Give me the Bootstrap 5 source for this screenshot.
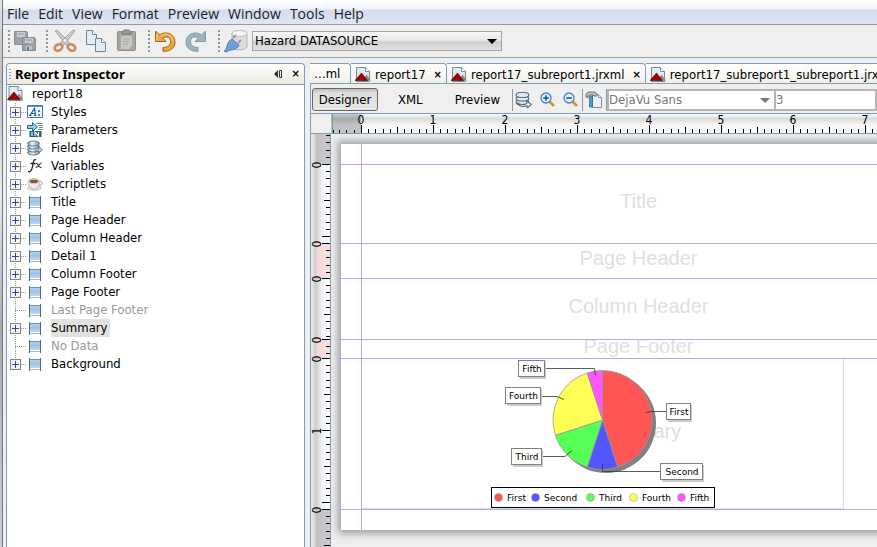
<!DOCTYPE html>
<html lang="en">
<head>
<meta charset="utf-8">
<meta name="viewport" content="width=device-width, initial-scale=1">
<title>Report designer</title>
<link rel="stylesheet" href="https://cdn.jsdelivr.net/npm/bootstrap@5.3.0/dist/css/bootstrap.min.css">
<style>
:root{--line:#7f9db9;--face:#efefef}
body{font-family:"DejaVu Sans Condensed","Noto Sans",sans-serif;font-size:13px;line-height:18px;color:#000;background:var(--face)}
svg{display:block;flex:none}
button,select,input{font:inherit;color:inherit;border:0;background:none;padding:0;border-radius:0}
.edge{width:3px;border-right:1px solid #777;background:linear-gradient(#dfe3e8,#b8bcc2 15%,#e8ebef 35%,#a4abb3 60%,#c8ccd8)}
.menus{height:25px;gap:9px;padding:3px 4px 0;font-family:"Open Sans","Noto Sans",sans-serif;font-size:14px;border-bottom:1px solid #999;background:linear-gradient(#fff,#f1f4fb 9px,#d5dcee 10px,#dfe5f4)}
.menus a{color:#222;text-decoration:none}
.tools{height:33px;border-bottom:1px solid #a0a0a0;padding-left:5px}
.near{margin-left:2px}
.grip{width:2px;height:23px;background:repeating-linear-gradient(#999 0 2px,transparent 2px 4px)}
.grip-s{width:2px;height:11px;background:repeating-linear-gradient(#999 0 1px,transparent 1px 3px)}
.picker{position:relative}
.picker select{appearance:none;width:100%;height:100%;padding-left:2px}
.picker::after{content:"";position:absolute;right:4px;top:7px;border:5px solid transparent;border-top-color:currentColor;border-bottom:0;pointer-events:none}
.source{width:250px;height:20px;border:1px solid #a5a5a5;background:linear-gradient(#f7f7f7,#e8e8e8 45%,#cecece 55%,#e2e2e2)}
.panes{padding-top:5px}
.inspector{width:299px;border:1px solid var(--line);border-bottom:0;border-radius:4px 4px 0 0;background:#fff;margin-left:3px}
.inspector-title{height:21px;border-bottom:1px solid var(--line);background:linear-gradient(#fff,#ece9e0);border-radius:4px 4px 0 0;font-family:"Noto Sans",sans-serif}
.tree{margin:0;padding:0;list-style:none}
.tree li{height:18px;padding-left:2px}
.tree .label{padding-right:2px}
.twig{width:18px;height:18px;background:repeating-linear-gradient(#999 0 1px,transparent 1px 2px) 6px 0/1px 18px no-repeat,repeating-linear-gradient(90deg,#999 0 1px,transparent 1px 2px) 6px 9px/11px 1px no-repeat}
.tree li:last-child .twig{background-size:1px 9px,11px 1px}
.plus{width:11px;height:11px;margin-left:1px;border:1px solid #858585;background:linear-gradient(#2b4a9b,#2b4a9b) 1px 4px/7px 1px no-repeat,linear-gradient(#2b4a9b,#2b4a9b) 4px 1px/1px 7px no-repeat,#f4f4f4}
.sel{background:#e1e1e1}
.off{color:#999}
.tabs{height:21px;border-bottom:1px solid var(--line);white-space:nowrap;overflow:hidden}
.tab-item{height:21px;border-top:1px solid var(--line);border-right:1px solid var(--line);border-radius:0 4px 0 0;background:linear-gradient(#fff,#f1efe8);padding:1px 4px 0}
.tab-first{width:41px}
.close-x{font-family:"DejaVu Sans",sans-serif;font-size:10px;font-weight:bold;line-height:14px}
.editor{border-left:1px solid var(--line)}
.work{margin-left:5px}
.modes{height:30px;padding:2px 0 0 1px;border-bottom:1px solid var(--line)}
.modes>*{flex-shrink:0}
.mode{height:23px}
.mode-on{width:66px;border:1px solid #666;border-radius:3px;background:linear-gradient(#bdbdbd,#dedede 4px,#e6e6e6)}
.bar{width:1px;height:22px;background:#999}
.field{height:22px;border:2px solid #b5b5b5;background:#fff;color:#777}
.font-pick{width:169px}
.font-pick select{padding-left:0}
.size-box{flex:1 1 0;min-width:0}
.ruler-x{height:20px;padding-left:20px;border-bottom:1px solid var(--line)}
.ruler-y{width:20px;border-right:1px solid var(--line)}
.desk{padding:10px 0 0 10px}
.sheet{position:relative;width:595px;background:#fff;box-shadow:0 0 8px 3px #999}
.guide{border-left:1px solid #aaf;position:absolute;left:20px;top:0;bottom:0}
.band{border-bottom:1px solid #aaf;padding-bottom:6px;font-family:"Liberation Sans",sans-serif;font-size:20px;line-height:20px;color:#e0e0e0;overflow:hidden}
.b-top{height:21px}.b-title{height:79px}.b-ph{height:35px}.b-ch{height:61px}.b-pf{height:19px;padding-bottom:2px}.b-sum{height:151px}
.b-end{height:20px;border:0}
.chart{position:absolute;left:21px;top:215px}
text{font-family:"DejaVu Sans Condensed","DejaVu Sans",sans-serif}
.chart text{font-family:"DejaVu Sans",sans-serif;font-size:9px}
</style>
<script src="https://cdn.jsdelivr.net/npm/bootstrap@5.3.0/dist/js/bootstrap.bundle.min.js"></script>
</head>
<body class="d-flex vh-100 overflow-hidden">
<svg width="0" height="0" class="position-absolute" aria-hidden="true">
<defs>
<linearGradient id="gBand" x2="0" y2="1"><stop stop-color="#b4cfeb"/><stop offset=".5" stop-color="#9fc2e6"/><stop offset="1" stop-color="#c3daf1"/></linearGradient>
<linearGradient id="gMetal" x2="1" y2="0"><stop stop-color="#7890a5"/><stop offset=".4" stop-color="#e8f0f6"/><stop offset="1" stop-color="#71899e"/></linearGradient>
<linearGradient id="gTop" x2="0" y2="1"><stop stop-color="#fff"/><stop offset=".25" stop-color="#d9d9d9"/><stop offset=".5" stop-color="#f4f4f4"/><stop offset="1" stop-color="#fff"/></linearGradient>
<linearGradient id="gSide" x2="1" y2="0"><stop stop-color="#eee"/><stop offset=".25" stop-color="#ccc"/><stop offset=".6" stop-color="#f4f4f4"/><stop offset="1" stop-color="#fff"/></linearGradient>
<symbol id="report" viewBox="0 0 16 16"><path d="M1.500 .5h9l4 4v10h-13z" fill="#e1e9f2" stroke="#7b8794"/><path d="M10.500 .5v4h4" fill="#fff" stroke="#7b8794"/><path d="M8 13.500l3.500-6 4.500 6z" fill="#8b8b8b"/><path d="M0 13.500L6.500 6l6 7.500z" fill="#a00000" stroke="#300" stroke-width=".6"/></symbol>
<symbol id="band" viewBox="0 0 16 16"><path d="M2.500 2v13M13.500 2v13" stroke="#5b6670"/><path d="M3 4h10v8H3z" fill="url(#gBand)"/><path d="M3 3.500h10" stroke="#6f93ba"/><path d="M3 12.500h10" stroke="#fff"/><path d="M3 13.500h10" stroke="#a9b9c9"/></symbol>
<symbol id="styles" viewBox="0 0 16 16"><path d="M.5 1.500h15v12H.5z" fill="#f7fbff" stroke="#347ac4"/><path d="M1 2.500h14" stroke="#4e98e3"/><path d="M3 11.500L7.500 4.500l1 7M4.500 9.500h4M2 11.500h2.500M7 11.500h2.500" fill="none" stroke="#1c5aa6" stroke-width="1.200"/><path d="M11 6h2v2h-2zM11 10h2v2h-2z" fill="#4c83b9"/></symbol>
<symbol id="param" viewBox="0 0 16 16"><path d="M9 1.500h7M11 3.500h5M12 5.500h4M11 7.500h5" stroke="#888"/><path d="M.5 3.500h5V.8l5 4.200-5 4.200V6.500h-5z" fill="#8fd0ef" stroke="#14689c"/><path d="M2.500 9h12v6h-12z" fill="#195f86"/><path d="M5 10v4M8 14v-4l3.500 4v-4" fill="none" stroke="#fff" stroke-width="1.200"/></symbol>
<symbol id="db" viewBox="0 0 16 16"><g fill="url(#gMetal)" stroke="#53687b" stroke-width=".8"><ellipse cx="6.500" cy="12.500" rx="6" ry="2.500"/><ellipse cx="6.500" cy="9.500" rx="6" ry="2.500"/><ellipse cx="6.500" cy="6.500" rx="6" ry="2.500"/><ellipse cx="6.500" cy="3.500" rx="6" ry="2.500"/></g><path d="M9 8.500h3V6.500l3.500 3.500-3.500 3v-2H8" fill="#b5c7d8" stroke="#60778c" stroke-width=".8"/></symbol>
<symbol id="query" viewBox="0 0 16 16"><g fill="#dfe8f0" stroke="#536d84"><ellipse cx="7" cy="10" rx="6" ry="2.500"/><ellipse cx="7" cy="6.500" rx="6" ry="2.500"/><ellipse cx="7" cy="3.200" rx="6" ry="2.500"/></g><path d="M2 10.500c2 2 6 2 9 1V9l4.500 3.200-4 3.300v-2c-4 1-8 0-9.500-3z" fill="#f6f9fb" stroke="#536d84"/></symbol>
<symbol id="fx" viewBox="0 0 16 16"><path d="M9 2C7 .5 6.500 3 6 6S4.500 15 1 13.500M3.500 5.500h5" fill="none" stroke="#222" stroke-width="1.300"/><path d="M9 5.500c2-1 2 5 5.500 4M14.500 5c-2-.5-3 5-6 4.500" fill="none" stroke="#333" stroke-width="1.100"/></symbol>
<symbol id="cup" viewBox="0 0 16 16"><ellipse cx="7.500" cy="12" rx="7" ry="2.300" fill="#ddd" stroke="#bbb" stroke-width=".6"/><path d="M1.500 5c0 5 2 8 5.500 8s5.500-3 5.500-8" fill="#eee" stroke="#aaa" stroke-width=".7"/><ellipse cx="7" cy="5" rx="5.500" ry="2.700" fill="#eee" stroke="#b7aaa0" stroke-width=".7"/><ellipse cx="7" cy="5.200" rx="4.300" ry="1.800" fill="#8d4f31"/><path d="M12.500 5.500c4-.5 3 4-1 4" fill="none" stroke="#bbb" stroke-width="1.200"/></symbol>
<symbol id="zoomlens" viewBox="0 0 16 16"><path d="M9.500 9.500l4.500 4.500" stroke="#c5953b" stroke-width="2.600"/><circle cx="6" cy="6" r="5" fill="#e6f1fd" stroke="#4881c4" stroke-width="1.300"/><path d="M3.200 6h5.600" stroke="#1854a5" stroke-width="1.600"/></symbol>
<pattern id="tickX" x="30" width="72" height="20" patternUnits="userSpaceOnUse"><path d="M.5 11v9M7.500 15v5M14.500 15v5M22.500 15v5M29.500 15v5M36.500 13v7M43.500 15v5M50.500 15v5M58.500 15v5M65.500 15v5" stroke="#000"/></pattern>
<pattern id="tickY" width="19" height="72" patternUnits="userSpaceOnUse"><path d="M11 .5h8M15 7.500h4M15 14.500h4M15 22.500h4M15 29.500h4M13 36.500h6M15 43.500h4M15 50.500h4M15 58.500h4M15 65.500h4" stroke="#000"/></pattern>
</defs>
</svg>

<div class="edge flex-shrink-0"></div>
<div class="d-flex flex-column flex-grow-1 overflow-hidden">
<nav class="menus d-flex align-items-center flex-shrink-0" aria-label="Main menu">
<a href="#">File</a><a href="#">Edit</a><a href="#">View</a><a href="#">Format</a><a href="#">Preview</a><a href="#">Window</a><a href="#">Tools</a><a href="#">Help</a>
</nav>
<div class="tools d-flex align-items-center flex-shrink-0">
<span class="grip"></span>
<button type="button" aria-label="Save all" class="near me-2"><svg width="26" height="24" viewBox="0 0 26 24"><g fill="#9aa3aa" stroke="#848d95"><path d="M2.500 2.500h12l1 1v12h-13zM10.500 8.500h12l1 1v12h-13z"/></g><path d="M5 3h8v5H5zM13 9h8v5h-8z" fill="#c7ccd0"/><path d="M6 5h6M14 11h6" stroke="#8c949c"/><path d="M14 17h6v4h-6z" fill="#c4c4c4"/><path d="M15 18h2v3h-2z" fill="#778"/></svg></button>
<span class="grip"></span>
<button type="button" aria-label="Cut" class="ms-1"><svg width="26" height="24" viewBox="0 0 26 24"><path d="M3 2l2-1L18 14l-3 3zM23 2l-2-1L8 14l3 3z" fill="#ccc" stroke="#999" stroke-width=".8"/><g fill="none" stroke="#c98d64" stroke-width="2.600"><ellipse cx="6.500" cy="18.500" rx="4" ry="3" transform="rotate(-25 6.500 18.500)"/><ellipse cx="19.500" cy="18.500" rx="4" ry="3" transform="rotate(25 19.500 18.500)"/></g></svg></button>
<button type="button" aria-label="Copy" class="ms-1"><svg width="26" height="24" viewBox="0 0 26 24"><g fill="#e3ebf3" stroke="#6f879d"><path d="M4.500 1.500h6l4 4v10h-10z"/><path d="M10.500 1.500v4h4" fill="#fff"/><path d="M13.500 9.500h6l4 4v9h-10z"/><path d="M19.500 9.500v4h4" fill="#fff"/></g></svg></button>
<button type="button" aria-label="Paste" class="ms-1"><svg width="28" height="24" viewBox="0 0 28 24"><rect x="5.500" y="2.500" width="18" height="19" rx="1" fill="#a9a69c" stroke="#918e85"/><path d="M8.500 6.500h12v10l-4 4h-8z" fill="#c7c7c4" stroke="#aaa"/><path d="M10 5V3l2-2h5l2 2v2z" fill="#999" stroke="#777"/><path d="M11 10h7M11 12.500h7M11 15h5" stroke="#aaa"/></svg></button>
<span class="grip ms-2"></span>
<button type="button" aria-label="Undo" class="near"><svg width="26" height="24" viewBox="0 0 26 24"><path d="M3.500 2v10.500H14l-3.200-3.200c3.500-3 8.200-.8 7.700 4-.4 3.200-3 5.200-7.500 5.200v3.800c7.500.2 12-3.500 12-9C23 4.500 13.500 1.500 7.500 6z" fill="#f0a53e" stroke="#a9620d"/><path d="M5 5v6M8.500 6.800c5-3.500 12-1 12.500 5" fill="none" stroke="#fbd595"/></svg></button>
<button type="button" aria-label="Redo" class="ms-1 me-2"><svg width="26" height="24" viewBox="0 0 26 24"><path d="M23.500 2v10.500H13l3.200-3.200c-3.500-3-8.200-.8-7.700 4 .4 3.200 3 5.200 7.500 5.200v3.800C8.500 22.500 4 18.800 4 13.300 4 4.500 13.500 1.500 19.500 6z" fill="#9db2be" stroke="#839aa8"/></svg></button>
<span class="grip near"></span>
<button type="button" aria-label="Data sources" class="near me-1"><svg width="26" height="24" viewBox="0 0 26 24"><path d="M10 4v14c2 4 13 4 15 0V4" fill="#ddd" stroke="#b5b5b5"/><ellipse cx="17.500" cy="4.500" rx="7.500" ry="3" fill="#f7f7f7" stroke="#bbb"/><path d="M2 22c2-1 2-2 3-5 1-4 3-6 5-7l7 6c-1 3-5 5-8 5-2 0-3 2-5 2z" fill="#6f9fdd" stroke="#4a7ec2"/><path d="M11 9l3-3M16 14l3-3" stroke="#999" stroke-width="2"/></svg></button>
<div class="picker source"><select aria-label="Data source"><option>Hazard DATASOURCE</option></select></div>
</div>

<main class="panes d-flex flex-grow-1 overflow-hidden">
<section class="inspector flex-shrink-0">
<div class="inspector-title d-flex align-items-center"><span class="grip-s near me-1"></span><span class="fw-bold flex-grow-1">Report Inspector</span>
<button type="button" aria-label="Minimise" class="me-1"><svg width="10" height="9" viewBox="0 0 10 9"><path d="M4 0v8L0 4z" fill="#333"/><path d="M5.500.5h2v7h-2z" fill="none" stroke="#333"/></svg></button>
<button type="button" class="close-x mx-1" aria-label="Close inspector">×</button></div>
<ul class="tree" id="tree">
<li class="d-flex align-items-center ps-0"><svg class="me-2" width="17" height="16"><use href="#report"/></svg><span class="label">report18</span></li>
</ul>
</section>

<section class="work flex-grow-1 overflow-hidden d-flex flex-column">
<div class="tabs d-flex flex-shrink-0" role="tablist" id="tabs">
<div class="tab-item tab-first flex-shrink-0">…ml</div>
</div>
<div class="editor flex-grow-1 d-flex flex-column overflow-hidden">
<div class="modes d-flex align-items-center flex-shrink-0">
<button type="button" class="mode mode-on">Designer</button>
<button type="button" class="mode ms-3 px-1">XML</button>
<button type="button" class="mode ms-4 px-1 me-2">Preview</button>
<span class="bar"></span>
<button type="button" aria-label="Report query" class="near me-1"><svg width="17" height="18" viewBox="0 0 16 16"><use href="#query"/></svg></button>
<button type="button" aria-label="Zoom in" class="mx-1"><svg width="15" height="16" viewBox="0 0 15 16"><use href="#zoomlens" width="16" height="16"/><path d="M6 3.200v5.600" stroke="#1854a5" stroke-width="1.600"/></svg></button>
<button type="button" aria-label="Zoom out" class="mx-1"><svg width="15" height="16"><use href="#zoomlens" width="16" height="16"/></svg></button>
<span class="bar"></span>
<button type="button" aria-label="Build" class="near me-1"><svg width="17" height="17" viewBox="0 0 17 17"><path d="M7.500 3.500h6l3 3v10h-9z" fill="#eaf1f8" stroke="#7a92a8"/><path d="M13.500 3.500v3h3" fill="#fff" stroke="#7a92a8"/><path d="M1 6V3l2-2h7l2 2v2H9L8 4H5L3 5v2z" fill="#b7bec4" stroke="#555e66" stroke-width=".8"/><path d="M4.500 5h3v11h-3z" fill="#439bcf" stroke="#28678f" stroke-width=".7"/></svg></button>
<span class="bar"></span>
<div class="picker field font-pick"><select aria-label="Font"><option>DejaVu Sans</option></select></div>
<input class="field size-box border-start-0" type="text" aria-label="Font size" value="3">
</div>
<div class="ruler-x flex-shrink-0">
<svg width="100%" height="19"><rect width="1000" height="20" fill="url(#gTop)"/><rect width="30" height="20" fill="#000" fill-opacity=".22"/><rect x="30" width="900" height="20" fill="url(#tickX)"/><path d="M2.500 16v4M8.500 16v4M15.500 16v4M23.500 16v4" stroke="#000"/><path d="M1.500 0v20" stroke="#68a79b"/><g id="inches" font-size="12" text-anchor="middle"></g></svg>
</div>
<div class="d-flex flex-grow-1 overflow-hidden">
<div class="ruler-y flex-shrink-0"><svg width="19" height="420"><rect width="19" height="420" fill="url(#gSide)"/><g id="bands" font-size="12" text-anchor="middle"></g></svg></div>
<div class="desk flex-grow-1 overflow-hidden">
<div class="sheet">
<div class="band b-top"></div>
<div class="band b-title d-flex align-items-center justify-content-center">Title</div>
<div class="band b-ph d-flex align-items-center justify-content-center">Page Header</div>
<div class="band b-ch d-flex align-items-center justify-content-center">Column Header</div>
<div class="band b-pf d-flex align-items-end justify-content-center">Page Footer</div>
<div class="band b-sum d-flex align-items-center justify-content-center">Summary</div>
<div class="band b-end"></div>
<svg class="chart" width="482" height="150" viewBox="362 359 482 150">
<path d="M362 508.500h481.500V359" fill="none" stroke="#ddd"/>
<circle cx="606" cy="423" r="50" fill="#808080"/>
<g stroke="#999" stroke-width=".8">
<path d="M602.500 420V370.500A49.500 49.500 0 0 1 617.800 467.100z" fill="#f55"/>
<path d="M602.500 420L617.800 467.100A49.500 49.500 0 0 1 587.200 467.100z" fill="#55f"/>
<path d="M602.500 420L587.200 467.100A49.500 49.500 0 0 1 555.400 435.300z" fill="#5f5"/>
<path d="M602.500 420L555.400 435.300A49.500 49.500 0 0 1 587.200 372.900z" fill="#ff5"/>
<path d="M602.500 420L587.200 372.900A49.500 49.500 0 0 1 602.500 370.500z" fill="#f5f"/>
</g>
<path d="M544 368.500h50.500l1 7M540 396.500h17l7 3M541 456.500h24l7-6M646 412.500l6-1h14M602.500 464v7.500H660" fill="none" stroke="#333" stroke-width=".8"/>
<g id="tags"></g>
<rect x="491.500" y="487.500" width="223" height="20" fill="#fff" stroke="#000"/>
<g id="legend"></g>
</svg>
<div class="guide"></div>
</div>
</div>
</div>
</div>
</section>
</main>
</div>
<script>
const add = (id, html) => document.getElementById(id).insertAdjacentHTML('beforeend', html);
[['Styles','styles'],['Parameters','param'],['Fields','db'],['Variables','fx'],['Scriptlets','cup'],['Title'],['Page Header'],['Column Header'],['Detail 1'],['Column Footer'],['Page Footer'],['Last Page Footer','band','off'],['Summary','band','sel'],['No Data','band','off'],['Background']].forEach(([name, icon = 'band', state = '']) =>
  add('tree', `<li class="d-flex align-items-center"><span class="twig d-flex align-items-center">${state === 'off' ? '' : `<button type="button" class="plus" aria-label="Expand ${name}"></button>`}</span><svg class="me-2" width="16" height="16"><use href="#${icon}"/></svg><span class="label ${state}">${name}</span></li>`));
['report17','report17_subreport1.jrxml','report17_subreport1_subreport1.jrxml'].forEach(name =>
  add('tabs', `<div class="tab-item d-flex align-items-center flex-shrink-0"><svg width="16" height="16"><use href="#report"/></svg><a href="#" role="tab" class="text-reset text-decoration-none ms-1 me-2">${name}</a><button type="button" class="close-x" aria-label="Close ${name}">×</button></div>`));
for (let i = 0; i < 8; i++) add('inches', `<text x="${30 + 72 * i}" y="10">${i}</text>`);
/* band tops on the side ruler: start, end, fill */
[[0,30,'#bbb'],[30,109,''],[109,144,'#f6d6d6'],[144,205,''],[205,224,'#f6d6d6'],[224,375,''],[375,420,'#bbb']].forEach(([a, b, fill], i) => {
  if (fill) add('bands', `<rect x="5" y="${a}" width="14" height="${b - a}" fill="${fill}" fill-opacity=".8"/>`);
  add('bands', `<svg y="${i ? a : -42}" width="19" height="${i ? b - a : 72}"><rect width="19" height="420" fill="url(#tickY)"/></svg>`);
  if (i) add('bands', `<text transform="translate(10 ${a + 1}) rotate(-90)">0</text>`);
});
add('bands', '<text transform="translate(10 297) rotate(-90)">1</text>');
[['Fifth',518,360,26],['Fourth',505,387,35],['Third',511,448,30],['First',666,403,24],['Second',660,463,42]].forEach(([t, x, y, w]) =>
  add('tags', `<rect x="${x + 2}" y="${y + 2}" width="${w}" height="17" fill="#ccc"/><rect x="${x + .5}" y="${y + .5}" width="${w}" height="16" fill="#fff" stroke="#808080"/><text x="${x + w / 2 + 1}" y="${y + 12}" text-anchor="middle">${t}</text>`));
[['First',498,'#f55'],['Second',535,'#55f'],['Third',590,'#5f5'],['Fourth',633,'#ff5'],['Fifth',681,'#f5f']].forEach(([t, x, c]) =>
  add('legend', `<circle cx="${x + .5}" cy="497.500" r="4" fill="${c}" stroke="#999" stroke-width=".5"/><text x="${x + 9}" y="501">${t}</text>`));
</script>
</body>
</html>
